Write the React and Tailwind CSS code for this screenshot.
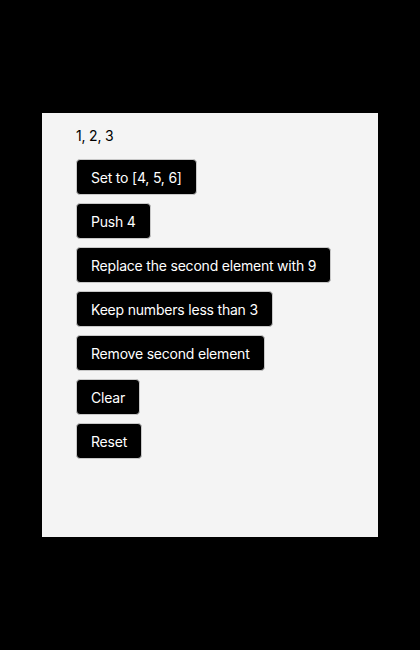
import React from "react";

const labels = [
  "Set to [4, 5, 6]",
  "Push 4",
  "Replace the second element with 9",
  "Keep numbers less than 3",
  "Remove second element",
  "Clear",
  "Reset",
];

export default function App() {
  return (
    <div className="w-[420px] h-[650px] bg-black pt-[113px] pl-[42px] font-[Inter,sans-serif]">
      <div className="w-[336px] h-[424px] bg-[#f4f4f4] pl-[34px] pt-[14px]">
        <div className="text-[14px] leading-[17px] text-black tracking-[-0.2px]">1, 2, 3</div>
        <div className="flex flex-col items-start gap-[8px] mt-[15px]">
          {labels.map((l) => (
            <button key={l} className="h-[36px] px-[14px] bg-black text-white text-[14px] tracking-[-0.2px] rounded-[4px] border border-[#c8c8c8]">
              {l}
            </button>
          ))}
        </div>
      </div>
    </div>
  );
}
